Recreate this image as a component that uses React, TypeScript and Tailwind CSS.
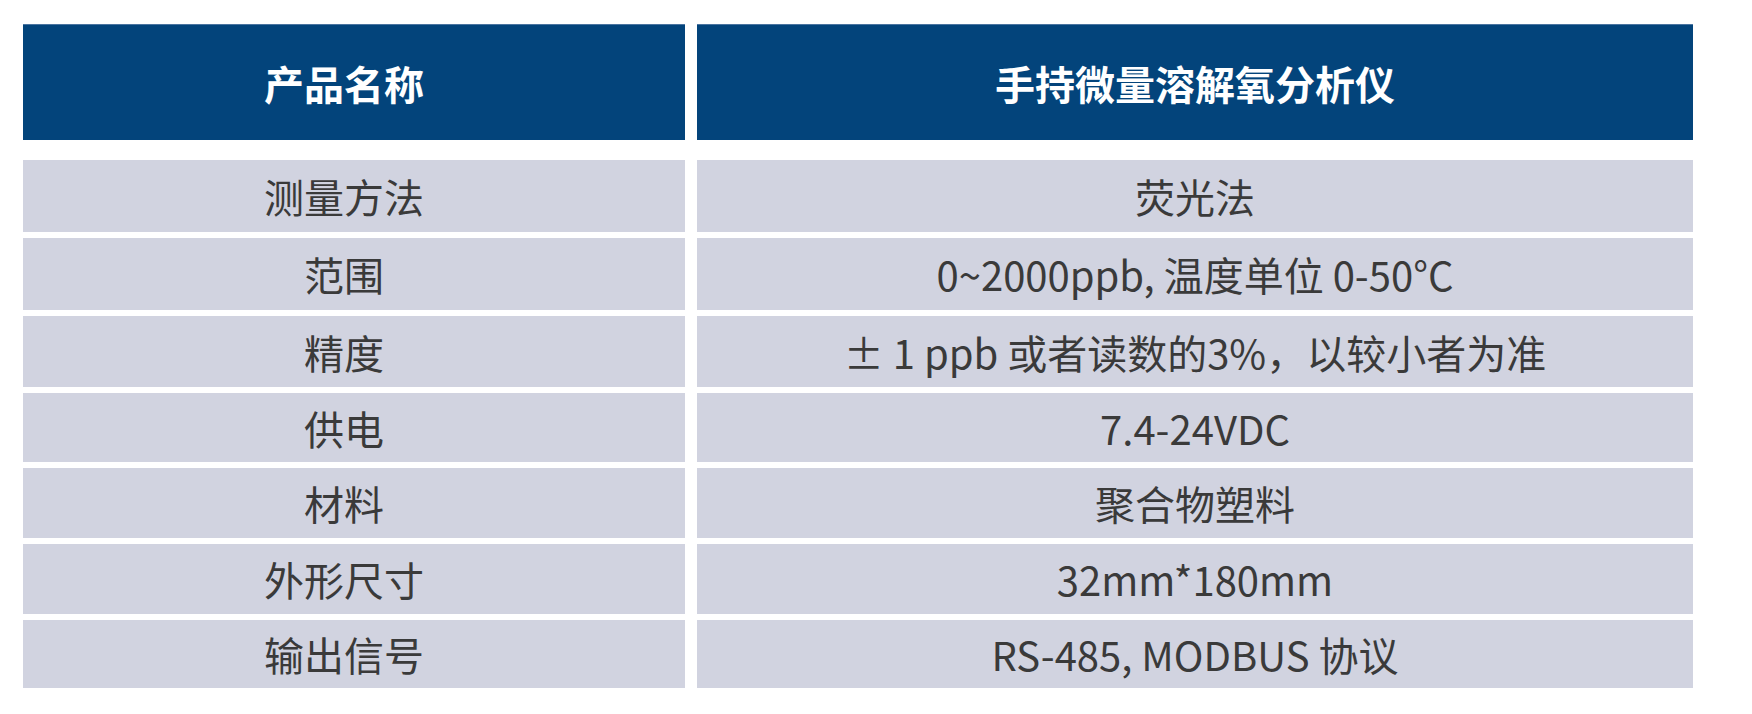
import React from 'react';

type SpecRow = {
  label: string;
  value: string;
  height: string;
};

const specRows: SpecRow[] = [
  { label: '测量方法', value: '荧光法', height: 'h-[72px]' },
  { label: '范围', value: '0~2000ppb, 温度单位 0-50°C', height: 'h-[72px]' },
  { label: '精度', value: '± 1 ppb 或者读数的3%，以较小者为准', height: 'h-[71px]' },
  { label: '供电', value: '7.4-24VDC', height: 'h-[69px]' },
  { label: '材料', value: '聚合物塑料', height: 'h-[70px]' },
  { label: '外形尺寸', value: '32mm*180mm', height: 'h-[70px]' },
  { label: '输出信号', value: 'RS-485, MODBUS 协议', height: 'h-[68px]' },
];

export default function App() {
  return (
    <main
      className="min-h-screen bg-white pl-[23px] pt-[24px]"
      style={{ fontFamily: '"Noto Sans CJK SC", "Noto Sans", sans-serif' }}
    >
      <div className="grid w-[1670px] grid-cols-[662px_996px] gap-x-[12px]">
        <div className="flex h-[116px] items-center justify-center border-t border-[#4a74a0] bg-[#03447b] pr-5 text-[40px] font-bold text-white">
          产品名称
        </div>
        <div className="flex h-[116px] items-center justify-center border-t border-[#4a74a0] bg-[#03447b] text-[40px] font-bold text-white">
          手持微量溶解氧分析仪
        </div>
      </div>

      <div className="mt-[20px] flex w-[1670px] flex-col gap-[6px]">
        {specRows.map((row) => (
          <div key={row.label} className="grid grid-cols-[662px_996px] gap-x-[12px]">
            <div
              className={`${row.height} flex items-center justify-center bg-[#d1d3e0] pr-5 text-[40px] text-[#3a3a3a]`}
            >
              {row.label}
            </div>
            <div
              className={`${row.height} flex items-center justify-center bg-[#d1d3e0] text-[40px] text-[#3a3a3a]`}
            >
              {row.value}
            </div>
          </div>
        ))}
      </div>
    </main>
  );
}
